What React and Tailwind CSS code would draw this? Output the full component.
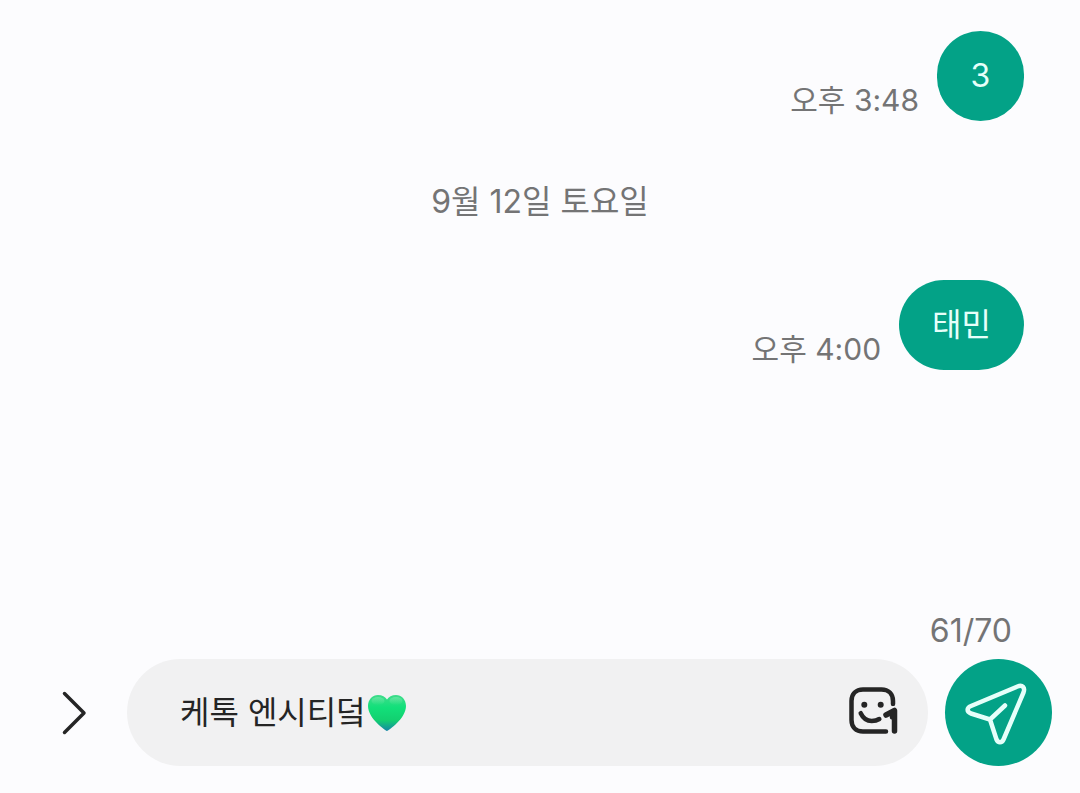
import { useState } from "react";

const messages = [
  { id: 1, text: "3", time: "오후 3:48" },
  { id: 2, date: "9월 12일 토요일", text: "태민", time: "오후 4:00" },
];

function GreenHeart() {
  return (
    <svg viewBox="0 0 38 36" className="ml-0.5 w-[38px] h-9 shrink-0" aria-hidden="true">
      <defs>
        <linearGradient id="heart" x1="0" y1="0" x2="0" y2="1">
          <stop offset="0" stopColor="#3fdc8b" />
          <stop offset="0.35" stopColor="#12e07a" />
          <stop offset="0.7" stopColor="#12d070" />
          <stop offset="1" stopColor="#1586a6" />
        </linearGradient>
        <linearGradient id="shine" x1="0" y1="0" x2="0" y2="1">
          <stop offset="0" stopColor="#a5f2c4" stopOpacity="0.4" />
          <stop offset="1" stopColor="#a5f2c4" stopOpacity="0" />
        </linearGradient>
      </defs>
      <path
        d="M19 36C17 35 0 23.5 0 11C0 4.5 4.5 0 10 0C14 0 17.5 1.800 19 4.500C20.500 1.800 24 0 28 0C33.500 0 38 4.500 38 11C38 23.500 21 35 19 36Z"
        fill="url(#heart)"
      />
      <ellipse cx="10" cy="6" rx="6.5" ry="4" fill="url(#shine)" />
      <ellipse cx="28" cy="6" rx="6.5" ry="4" fill="url(#shine)" />
    </svg>
  );
}

function StickerIcon() {
  return (
    <svg
      viewBox="0 0 50 52"
      className="w-[50px] h-[52px]"
      fill="none"
      stroke="#252525"
      strokeWidth="4.5"
      strokeLinecap="round"
      strokeLinejoin="round"
      aria-hidden="true"
    >
      <path d="M45 17V14C45 7 40.5 2.5 33.5 2.5H15C8 2.5 3.5 7 3.5 14V33C3.5 40 8 44.5 15 44.5H38" />
      <path d="M12.7 26.2C15 31 19 34 23.7 34C26.5 34 29.3 33.3 31.3 32" />
      <circle cx="16.3" cy="17.8" r="3" fill="#252525" stroke="none" />
      <circle cx="32.7" cy="17.8" r="3" fill="#252525" stroke="none" />
      <path d="M38 28L46.5 23.5V44" stroke="#f1f1f2" strokeWidth="9" />
      <path d="M38 28L46.500 23.5V44M44.500 27V30" strokeWidth="5.5" />
    </svg>
  );
}

function SendIcon() {
  return (
    <svg
      viewBox="0 0 72 72"
      className="size-[72px]"
      fill="none"
      stroke="#e6fffa"
      strokeWidth="4.5"
      strokeLinecap="round"
      strokeLinejoin="round"
      aria-hidden="true"
    >
      <path d="M27 42.5L8 36.5C3.5 35 3.5 30.8 8 29L54.5 9.5C59.5 7.5 62.3 10.5 60.5 15.5L40.5 62.5C39 66 35 66 33.5 62.5L27 42.5L42 28.5" />
    </svg>
  );
}

function Message({ text, time }) {
  return (
    <div className="flex justify-end items-end gap-[18px] px-14">
      <time className="pb-px text-[30px] leading-10 text-[#747475]">{time}</time>
      <p className="flex items-center justify-center min-w-[87px] h-[90px] px-[33px] rounded-full bg-[#03a287] text-[32px] leading-10 text-[#e6fffa]">
        {text}
      </p>
    </div>
  );
}

export default function App() {
  const [draft, setDraft] = useState("케톡 엔시티덬");

  return (
    <div className="min-h-screen flex flex-col bg-[#fcfcfe] font-['Inter','Noto_Sans_CJK_KR',sans-serif]">
      {/* Conversation */}
      <main className="flex-1 pt-[31px]">
        {messages.map((m) => (
          <section key={m.id}>
            {m.date && (
              <h2 className="pt-[61px] pb-[58px] text-center text-[32px] leading-10 text-[#747475]">
                {m.date}
              </h2>
            )}
            <Message text={m.text} time={m.time} />
          </section>
        ))}
      </main>

      {/* Composer */}
      <footer className="pb-[27px]">
        <p className="pr-[68px] mb-2 text-right text-[32px] leading-10 text-[#747475]">
          61/70
        </p>
        <form
          className="flex items-center gap-[17px] pl-[42px] pr-7"
          onSubmit={(e) => e.preventDefault()}
        >
          <button type="button" aria-label="더보기" className="w-[68px] shrink-0 pl-4">
            <svg
              viewBox="0 0 32 48"
              className="w-8 h-12"
              fill="none"
              stroke="#252525"
              strokeWidth="3.5"
              strokeLinecap="round"
              strokeLinejoin="round"
              aria-hidden="true"
            >
              <path d="M6.5 4.5L26 24L6.5 43.5" />
            </svg>
          </button>
          <div className="flex-1 min-w-0 h-[107px] flex items-center pl-[53px] pr-[30px] rounded-full bg-[#f1f1f2]">
            <input
              type="text"
              aria-label="메시지 입력"
              value={draft}
              onChange={(e) => setDraft(e.target.value)}
              className="field-sizing-content min-w-0 text-[32px] leading-10 text-[#252525] outline-none"
            />
            <GreenHeart />
            <button type="button" aria-label="스티커" className="ml-auto shrink-0">
              <StickerIcon />
            </button>
          </div>
          <button
            type="submit"
            aria-label="보내기"
            className="size-[107px] shrink-0 flex items-center justify-center rounded-full bg-[#03a287]"
          >
            <SendIcon />
          </button>
        </form>
      </footer>
    </div>
  );
}
